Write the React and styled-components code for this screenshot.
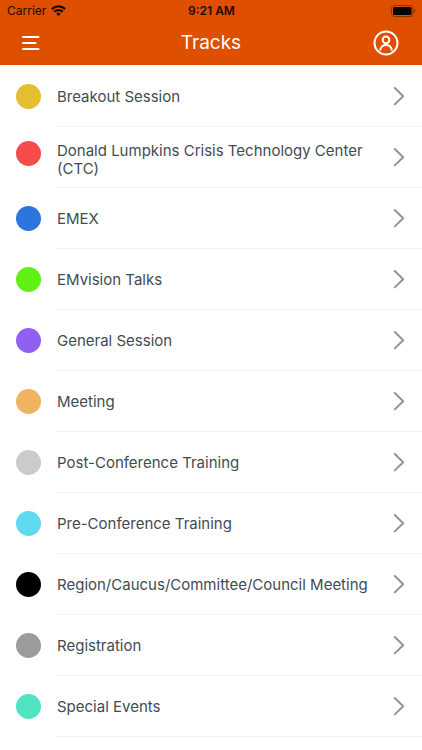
import React from 'react'
import styled, { createGlobalStyle } from 'styled-components'

const GlobalStyle = createGlobalStyle`
  * {
    box-sizing: border-box;
  }

  body {
    margin: 0;
    background: #fff;
    font-family: Inter, "Liberation Sans", sans-serif;
  }
`

const Header = styled.header`
  background: #de4f00;
`

const StatusBar = styled.div`
  display: grid;
  grid-template-columns: 1fr auto 1fr;
  align-items: center;
  height: 21px;
  padding: 0 6px 0 7px;
  color: #1c0a00;
  font-size: 12px;
  line-height: 16px;
`

const Carrier = styled.span`
  display: flex;
  align-items: center;
  gap: 5px;
`

const Clock = styled.span`
  font-weight: 600;
`

const Battery = styled.svg`
  justify-self: end;
`

const NavBar = styled.nav`
  display: grid;
  grid-template-columns: 1fr auto 1fr;
  align-items: center;
  height: 44px;
  padding: 0 22px;
`

const Title = styled.h1`
  margin: 0;
  color: #fff;
  font-size: 19px;
  font-weight: 400;
  line-height: 40px;
`

const IconButton = styled.button`
  display: flex;
  justify-self: ${({ $end }) => ($end ? 'end' : 'start')};
  padding: 0;
  border: none;
  background: none;
  color: #fff;
  cursor: pointer;
`

const TrackList = styled.ul`
  margin: 0;
  padding: 1px 0 12px;
  list-style: none;
`

const TrackLink = styled.a`
  display: flex;
  align-items: center;
  min-height: 61px;
  padding-left: 16px;
  color: #414c53;
  text-decoration: none;
`

const Dot = styled.span`
  flex: none;
  align-self: ${({ $top }) => ($top ? 'flex-start' : 'center')};
  width: 25px;
  height: 25px;
  margin-top: ${({ $top }) => ($top ? '14px' : '0')};
  border-radius: 50%;
  background: ${({ $color }) => $color};
`

const TrackBody = styled.span`
  display: flex;
  flex: 1;
  align-items: center;
  min-height: 61px;
  margin-left: 15px;
  padding: 0 17px 0 1px;
  border-bottom: 1px solid #f1f2f3;
`

const TrackName = styled.span`
  flex: 1;
  padding-top: ${({ $top }) => ($top ? '6px' : '2px')};
  padding-right: 16px;
  font-size: 15px;
  font-weight: 400;
  line-height: 18px;
`

const tracks = [
  { name: 'Breakout Session', color: '#e6bc31' },
  { name: 'Donald Lumpkins Crisis Technology Center (CTC)', color: '#f44b4b', long: true },
  { name: 'EMEX', color: '#2b75dc' },
  { name: 'EMvision Talks', color: '#60f014' },
  { name: 'General Session', color: '#9160f2' },
  { name: 'Meeting', color: '#f0b360' },
  { name: 'Post-Conference Training', color: '#cbcbcb' },
  { name: 'Pre-Conference Training', color: '#5fd9f0' },
  { name: 'Region/Caucus/Committee/Council Meeting', color: '#000' },
  { name: 'Registration', color: '#9b9b9b' },
  { name: 'Special Events', color: '#51e4c1' },
]

function WifiIcon() {
  return (
    <svg width="15" height="11" viewBox="0 0 15 11" fill="none" stroke="currentColor" strokeWidth="2.2" aria-hidden="true">
      <path d="M0.8 4.1a9.5 9.5 0 0 1 13.4 0" />
      <path d="M3.2 6.8a6.1 6.1 0 0 1 8.6 0" />
      <path d="M7.5 11 5.2 8.7a3.3 3.3 0 0 1 4.6 0z" fill="currentColor" stroke="none" />
    </svg>
  )
}

function BatteryIcon() {
  return (
    <Battery width="25" height="12" viewBox="0 0 25 12" role="img" aria-label="Battery full">
      <rect x="0.5" y="0.5" width="21.5" height="11" rx="3" fill="none" stroke="#8b3200" />
      <rect x="2" y="2" width="18.5" height="8" rx="1.5" fill="#000" />
      <path d="M23.2 4v4c1.6-.7 1.6-3.3 0-4z" fill="#8b3200" />
    </Battery>
  )
}

function MenuIcon() {
  return (
    <svg width="18" height="16" viewBox="0 0 18 16" fill="none" stroke="currentColor" strokeWidth="2" strokeLinecap="round" aria-hidden="true">
      <path d="M1 2h15.5M1 8h12.5M1 14h15.5" />
    </svg>
  )
}

function ProfileIcon() {
  return (
    <svg width="28" height="26" viewBox="0 0 28 26" fill="none" stroke="currentColor" strokeWidth="2" strokeLinecap="round" aria-hidden="true">
      <circle cx="14" cy="13" r="11.5" />
      <circle cx="14" cy="9.9" r="3.3" />
      <path d="M8.2 19.8c.7-3.2 2.9-4.9 5.8-4.9s5.1 1.7 5.8 4.9" />
    </svg>
  )
}

function Chevron() {
  return (
    <svg width="12" height="20" viewBox="0 0 12 20" fill="none" stroke="#8a969f" strokeWidth="2" strokeLinecap="round" strokeLinejoin="round" aria-hidden="true">
      <path d="M1.8 2 10.2 10.2 1.8 18.4" />
    </svg>
  )
}

function App() {
  return (
    <>
      <GlobalStyle />
      <Header>
        <StatusBar>
          <Carrier>
            Carrier
            <WifiIcon />
          </Carrier>
          <Clock>9:21 AM</Clock>
          <BatteryIcon />
        </StatusBar>
        <NavBar>
          <IconButton type="button" aria-label="Menu">
            <MenuIcon />
          </IconButton>
          <Title>Tracks</Title>
          <IconButton type="button" aria-label="Profile" $end>
            <ProfileIcon />
          </IconButton>
        </NavBar>
      </Header>
      <main>
        <TrackList>
          {tracks.map((track) => (
            <li key={track.name}>
              <TrackLink href="#">
                <Dot $color={track.color} $top={track.long} />
                <TrackBody>
                  <TrackName $top={track.long}>{track.name}</TrackName>
                  <Chevron />
                </TrackBody>
              </TrackLink>
            </li>
          ))}
        </TrackList>
      </main>
    </>
  )
}

export default App
